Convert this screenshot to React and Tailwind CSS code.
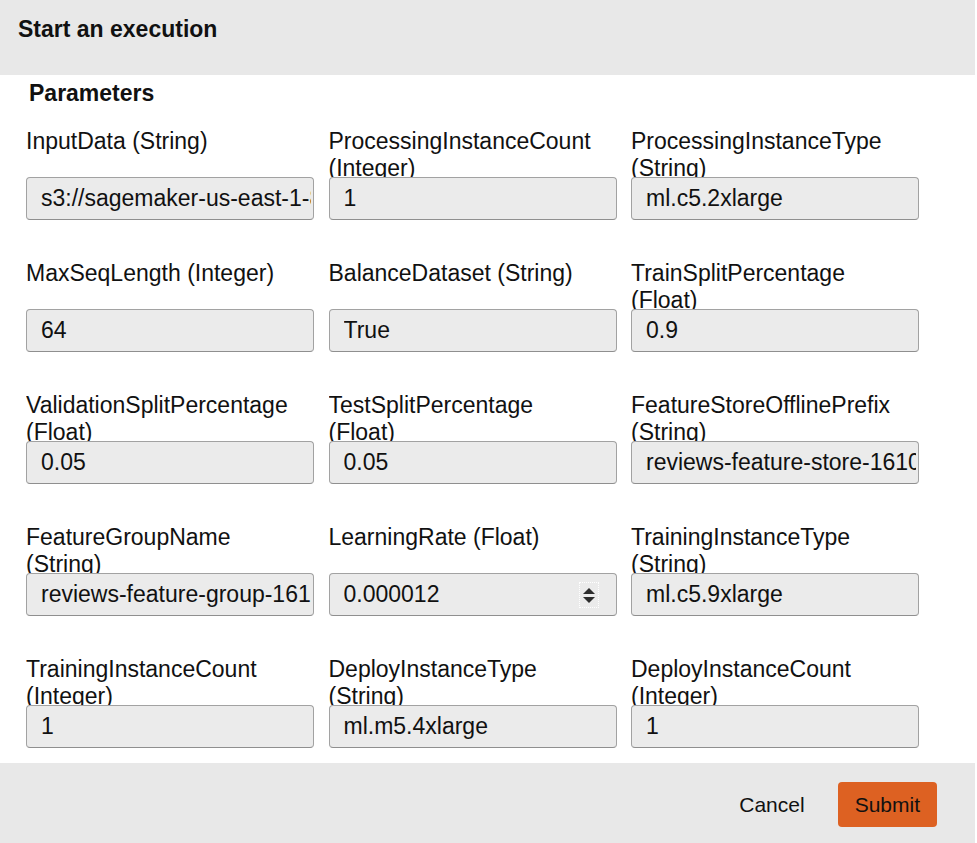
import React from "react";

// wrap: the label breaks before the type in the reference
const params = [
  { name: "InputData", type: "String", value: "s3://sagemaker-us-east-1-806570384721/amazon-reviews-pds/tsv/" },
  { name: "ProcessingInstanceCount", type: "Integer", value: "1", wrap: true },
  { name: "ProcessingInstanceType", type: "String", value: "ml.c5.2xlarge", wrap: true },
  { name: "MaxSeqLength", type: "Integer", value: "64" },
  { name: "BalanceDataset", type: "String", value: "True" },
  { name: "TrainSplitPercentage", type: "Float", value: "0.9", wrap: true },
  { name: "ValidationSplitPercentage", type: "Float", value: "0.05", wrap: true },
  { name: "TestSplitPercentage", type: "Float", value: "0.05", wrap: true },
  { name: "FeatureStoreOfflinePrefix", type: "String", value: "reviews-feature-store-1610000000", wrap: true },
  { name: "FeatureGroupName", type: "String", value: "reviews-feature-group-1610000000", wrap: true },
  { name: "LearningRate", type: "Float", value: "0.000012", spinner: true },
  { name: "TrainingInstanceType", type: "String", value: "ml.c5.9xlarge", wrap: true },
  { name: "TrainingInstanceCount", type: "Integer", value: "1", wrap: true },
  { name: "DeployInstanceType", type: "String", value: "ml.m5.4xlarge", wrap: true },
  { name: "DeployInstanceCount", type: "Integer", value: "1", wrap: true },
];

const Spinner = () => (
  <span className="flex items-center justify-center w-[20px] h-[26px] border border-dotted border-white">
    <svg width="14" height="20" viewBox="0 0 14 20">
      <path d="M7 3 L13 9 L1 9 Z" fill="#2d2d2d" />
      <path d="M1 12 L13 12 L7 18 Z" fill="#2d2d2d" />
    </svg>
  </span>
);

const Field = ({ name, type, value, spinner, wrap }) => (
  <div className="flex flex-col">
    <div className="h-[50px] pt-[1px] overflow-hidden text-[23px] leading-[27px] text-[#111]">
      {name}
      {wrap ? <br /> : " "}({type})
    </div>
    <div className="h-[43px] flex items-center rounded-[4px] border border-[#a2a2a2] border-b-[#8f8f8f] bg-[#ebebeb] pl-[14px] pr-[2px] overflow-hidden">
      <span className="flex-1 whitespace-nowrap overflow-hidden text-[23px] text-[#111]">
        {value}
      </span>
      {spinner && (
        <span className="mr-[15px]">
          <Spinner />
        </span>
      )}
    </div>
  </div>
);

const App = () => {
  return (
    <div
      className="w-[975px] h-[843px] bg-white flex flex-col overflow-hidden"
      style={{ fontFamily: '"Liberation Sans", Arial, sans-serif' }}
    >
      <div className="h-[75px] shrink-0 bg-[#e8e8e8] px-[18px] pt-[16px]">
        <h1 className="text-[23px] leading-[27px] font-bold text-[#111]">
          Start an execution
        </h1>
      </div>
      <div className="flex-1 flex flex-col pl-[26px] pt-[5px]">
        <h2 className="ml-[3px] text-[23px] leading-[27px] font-bold text-[#111]">
          Parameters
        </h2>
        <div className="mt-[20px] grid grid-cols-[288px_288px_288px] gap-x-[14.5px] gap-y-[39px]">
          {params.map((p) => (
            <Field key={p.name} {...p} />
          ))}
        </div>
      </div>
      <div className="h-[80px] shrink-0 bg-[#e8e8e8] flex items-start justify-end gap-[33px] pr-[38px] pt-[19px]">
        <button className="h-[45px] text-[21px] text-[#111]">Cancel</button>
        <button className="h-[45px] px-[17px] rounded-[4px] bg-[#dd6122] text-[21px] text-[#111]">
          Submit
        </button>
      </div>
    </div>
  );
};

export default App;
